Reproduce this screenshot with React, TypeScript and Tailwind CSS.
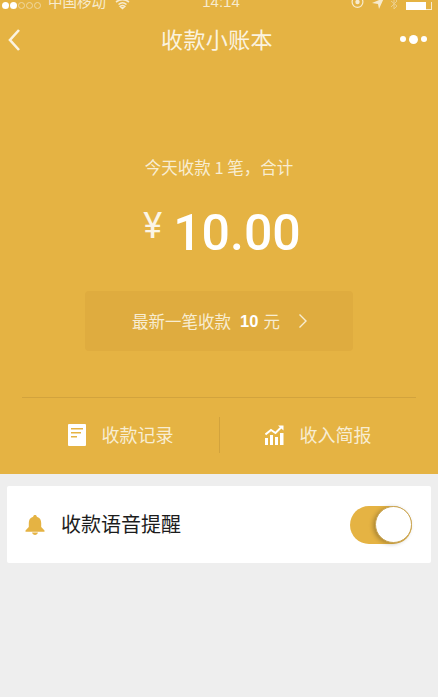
import React from "react";

const CJK = `"Noto Sans CJK SC", "Liberation Sans", sans-serif`;

export default function App() {
  return (
    <div className="w-[438px] h-[697px] overflow-hidden flex flex-col bg-[#eeeeee]" style={{ fontFamily: CJK }}>
      <div className="h-[474px] shrink-0 bg-[#e5b343] flex flex-col text-white">
        {/* status bar */}
        <div className="h-[10px] grid grid-cols-[1fr_auto_1fr] items-center pl-[2px] pr-[4px] text-[#f7ebce] text-[14.5px] leading-none overflow-hidden">
          <div className="flex items-center">
            <div className="flex gap-[1px] items-center mr-[7px]">
              <span className="w-[7px] h-[7px] rounded-full bg-white" />
              <span className="w-[7px] h-[7px] rounded-full bg-white" />
              <span className="w-[7px] h-[7px] rounded-full border border-[#f0d8a0]" />
              <span className="w-[7px] h-[7px] rounded-full border border-[#f0d8a0]" />
              <span className="w-[7px] h-[7px] rounded-full border border-[#f0d8a0]" />
            </div>
            <span className="-mt-[7px]">中国移动</span>
            <svg width="15" height="10" viewBox="0 0 15 10" className="ml-[9px]">
              <path d="M1 2 Q7.5 -2.5 14 2 M3.5 4.5 Q7.5 1 11.5 4.5 M7.5 8.5 L5.2 6.3 Q7.5 4.6 9.8 6.3 Z" stroke="#f7ebce" strokeWidth="1.6" fill="none" />
            </svg>
          </div>
          <span className="-mt-[7px] ml-[6px] text-[15px]" style={{ fontFamily: '"Liberation Sans", sans-serif' }}>14:14</span>
          <div className="flex items-center justify-end">
            <svg width="13" height="10" viewBox="0 0 13 10">
              <circle cx="6.5" cy="2" r="5.4" stroke="#f7ebce" strokeWidth="1.2" fill="none" />
              <circle cx="6.5" cy="2" r="2.2" fill="#f7ebce" />
            </svg>
            <svg width="12" height="10" viewBox="0 0 12 10" className="ml-[8px]">
              <path d="M0 3 L12 -2 L7 9 L6 4 Z" fill="#f7ebce" />
            </svg>
            <svg width="8" height="10" viewBox="0 0 8 10" className="ml-[6px]">
              <path d="M1 1 L7 6 L4 9 V-2 L7 1 L1 7" stroke="#eccf8d" strokeWidth="1" fill="none" />
            </svg>
            <div className="flex items-end w-[28px] h-[10px] ml-[8px]">
              <div className="w-[20px] h-[8px] bg-white" />
              <div className="w-[6px] h-[8px] border-b border-r border-[#f7ebce]" />
            </div>
          </div>
        </div>

        {/* nav */}
        <div className="h-[58px] grid grid-cols-[1fr_auto_1fr] items-center pl-[7px] pr-[11px]">
          <svg width="14" height="24" viewBox="0 0 14 24" fill="none" className="mt-[2px]">
            <path d="M12 2 L3 12 L12 22" stroke="#fbf3e0" strokeWidth="2.6" />
          </svg>
          <span className="text-[22px] leading-none tracking-[0.4px] text-[#fbf3e0] -mt-[2px]">收款小账本</span>
          <div className="flex items-center justify-end gap-[3px]">
            <span className="w-[6px] h-[6px] rounded-full bg-white" />
            <span className="w-[9px] h-[9px] rounded-full bg-white" />
            <span className="w-[6px] h-[6px] rounded-full bg-white" />
          </div>
        </div>

        {/* summary */}
        <div className="mt-[89px] text-center text-[16.5px] leading-[20px] text-[#f8edd2]">今天收款 1 笔，合计</div>
        <div className="mt-[21px] flex justify-center items-start h-[70px] pl-[6px]" style={{ fontFamily: '"Roboto", sans-serif' }}>
          <span className="text-[36px] leading-[56px] text-[#fbf5e6] mr-[11px]">¥</span>
          <span className="text-[50px] leading-[70px] font-medium text-white">10.00</span>
        </div>

        <div className="mt-[23px] mx-[85px] h-[60px] rounded-[4px] bg-[#dfac3f] flex items-center justify-center text-[16.5px] text-[#f8edd2] pl-[2px]">
          <span>最新一笔收款</span>
          <span className="ml-[9px] font-bold text-white" style={{ fontFamily: '"Liberation Sans", sans-serif' }}>10</span>
          <span className="ml-[5px]">元</span>
          <svg width="10" height="16" viewBox="0 0 10 16" fill="none" className="ml-[18px]">
            <path d="M1.5 1.5 L8 8 L1.5 14.5" stroke="#f8edd2" strokeWidth="1.4" />
          </svg>
        </div>

        {/* actions */}
        <div className="mt-[46px] mx-[22px] border-t border-[#d2a33d] flex-1 flex items-center pb-[3px]">
          <div className="w-[197px] flex items-center justify-center gap-[16px] text-[18px] text-[#f8edd2]">
            <svg width="18" height="22" viewBox="0 0 18 22">
              <path fillRule="evenodd" clipRule="evenodd" d="M1 0 H17 A1 1 0 0 1 18 1 V21 A1 1 0 0 1 17 22 H1 A1 1 0 0 1 0 21 V1 A1 1 0 0 1 1 0 Z M3 4 V5.5 H15 V4 Z M3 8 V9.5 H13 V8 Z M3 12 V13.5 H9 V12 Z" fill="#ffffff" />
            </svg>
            <span>收款记录</span>
          </div>
          <div className="w-px h-[36px] bg-[#d2a33d]" />
          <div className="flex-1 flex items-center justify-center gap-[16px] text-[18px] text-[#f8edd2]">
            <svg width="19" height="20" viewBox="0 0 19 20" fill="#ffffff">
              <path d="M0 20 V13 H3 V20 Z M5 20 V10 H8 V20 Z M10 20 V12 H13 V20 Z M15 20 V8 H18.5 V20 Z" />
              <path d="M0.5 9.5 L6 5 L10.5 8 L16 2.5" stroke="#ffffff" strokeWidth="2" fill="none" />
              <path d="M13 0.5 H18.5 V5.5 Z" />
            </svg>
            <span>收入简报</span>
          </div>
        </div>
      </div>

      {/* card */}
      <div className="mt-[12px] mx-[7px] h-[77px] rounded-[2px] bg-white flex items-center pl-[18px] pr-[19px]">
        <svg width="20" height="20" viewBox="0 0 20 20" fill="#e5b343">
          <path d="M10 0 C11 0 11.8 0.7 11.8 1.7 C15 2.6 16.2 5 16.2 8 V12 L19.5 15.5 V16.8 H0.5 V15.5 L3.8 12 V8 C3.8 5 5 2.6 8.2 1.7 C8.2 0.7 9 0 10 0 Z" />
          <path d="M7 17.6 H13 C12.6 19.2 11.4 20 10 20 C8.6 20 7.4 19.2 7 17.6 Z" />
        </svg>
        <span className="ml-[16px] -mt-[2px] text-[20px] leading-none text-[#1c1c1c]">收款语音提醒</span>
        <div className="ml-auto w-[62px] h-[38px] rounded-full bg-[#e5b343] flex items-center justify-end">
          <div className="w-[37px] h-[37px] rounded-full bg-white border border-[#c9a453] shadow-[-2px_1px_4px_rgba(0,0,0,0.25)]" />
        </div>
      </div>
    </div>
  );
}
